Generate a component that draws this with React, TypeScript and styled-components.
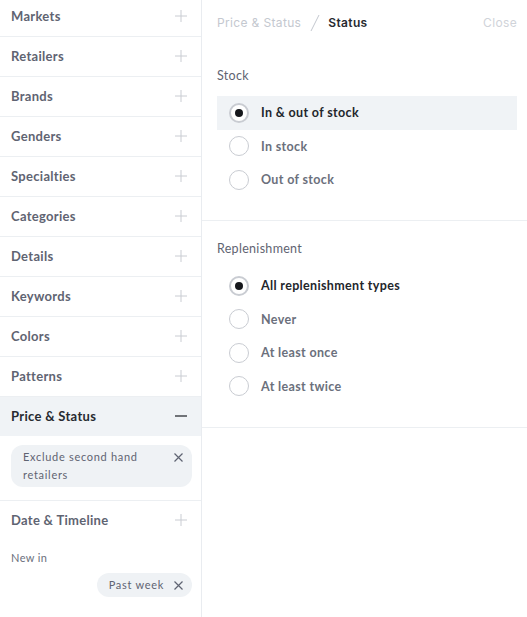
import React, { useState } from "react";
import styled, { createGlobalStyle } from "styled-components";

//--------------Styled Components--------------

const GlobalStyle = createGlobalStyle`
  html, body {
    margin: 0;
    padding: 0;
    background: #ffffff;
    font-family: Lato, "Open Sans", sans-serif;
    -webkit-font-smoothing: antialiased;
  }
`;

const Page = styled.div`
  display: flex;
  width: 527px;
  height: 617px;
  overflow: hidden;
`;

const Sidebar = styled.div`
  width: 201px;
  flex-shrink: 0;
  border-right: 1px solid #e9ecf0;
  display: flex;
  flex-direction: column;
  margin-top: -3px;
`;

const Section = styled.div<{ $last?: boolean }>`
  border-bottom: ${(p) => (p.$last ? "none" : "1px solid #eceff2")};
`;

const SectionHeader = styled.div<{ $open?: boolean }>`
  height: 39px;
  box-sizing: border-box;
  display: flex;
  align-items: center;
  justify-content: space-between;
  padding: 0 14px 2px 11px;
  background: ${(p) => (p.$open ? "#f0f3f6" : "transparent")};
`;

const SectionTitle = styled.span<{ $open?: boolean }>`
  font-size: 13px;
  font-weight: 700;
  letter-spacing: 0.3px;
  color: ${(p) => (p.$open ? "#272a30" : "#5f6472")};
`;

const SectionBody = styled.div`
  padding: 9px 9px 13px 11px;
  display: flex;
  flex-direction: column;
`;

const SubLabel = styled.div`
  font-size: 11px;
  letter-spacing: 0.4px;
  color: #6b707c;
  margin: 2px 0 9px;
`;

const Chip = styled.div<{ $right?: boolean }>`
  display: flex;
  align-items: flex-start;
  gap: 10px;
  background: #eff2f5;
  border-radius: 12px;
  padding: 3px 9px 3px 12px;
  align-self: ${(p) => (p.$right ? "flex-end" : "stretch")};
`;

const ChipText = styled.span`
  flex: 1;
  font-size: 11px;
  line-height: 18px;
  letter-spacing: 0.7px;
  color: #5f6472;
`;

const ChipClose = styled.span`
  display: flex;
  align-items: center;
  height: 14px;
  margin-top: 2px;
`;

const Main = styled.div`
  flex: 1;
  display: flex;
  flex-direction: column;
`;

const TopBar = styled.div`
  height: 44px;
  display: flex;
  align-items: center;
  padding: 1px 10px 0 15px;
  box-sizing: border-box;
  font-family: Inter, "Open Sans", sans-serif;
  font-size: 12px;
  letter-spacing: 0.35px;
`;

const Crumb = styled.span<{ $current?: boolean }>`
  color: ${(p) => (p.$current ? "#272a30" : "#c4c8cf")};
  font-weight: ${(p) => (p.$current ? 600 : 400)};
`;

const Slash = styled.span`
  display: flex;
  margin: 0 8px 0 9px;
`;

const CloseLink = styled.span`
  margin-left: auto;
  color: #d0d3d9;
`;

const Group = styled.div`
  padding: 24px 10px 23.5px 15px;
  border-bottom: 1px solid #eceff2;

  & + & {
    padding-top: 20px;
    padding-bottom: 24px;
  }
`;

const GroupTitle = styled.div`
  font-size: 12.5px;
  letter-spacing: 0.3px;
  color: #5f6472;
  margin-bottom: 12px;
  height: 16px;
  line-height: 16px;
`;

const Option = styled.div<{ $shaded?: boolean }>`
  height: 33.5px;
  display: flex;
  align-items: center;
  gap: 12px;
  padding-left: 12px;
  background: ${(p) => (p.$shaded ? "#f0f3f6" : "transparent")};
`;

const RadioCircle = styled.span<{ $selected?: boolean }>`
  width: 20px;
  height: 20px;
  box-sizing: border-box;
  border-radius: 50%;
  border: ${(p) => (p.$selected ? "2px solid #c9ccd2" : "1px solid #c9ccd2")};
  background: #ffffff;
  display: flex;
  align-items: center;
  justify-content: center;

  &::after {
    content: "";
    display: ${(p) => (p.$selected ? "block" : "none")};
    width: 8px;
    height: 8px;
    border-radius: 50%;
    background: #16181c;
  }
`;

const OptionLabel = styled.span<{ $selected?: boolean }>`
  font-size: 12.5px;
  font-weight: 700;
  letter-spacing: 0.35px;
  color: ${(p) => (p.$selected ? "#23262c" : "#6b707c")};
`;

//============================================

const PlusIcon = () => (
  <svg width="12" height="12" viewBox="0 0 12 12">
    <path d="M6 0v12M0 6h12" stroke="#c9ccd2" strokeWidth="1" />
  </svg>
);

const MinusIcon = () => (
  <svg width="12" height="12" viewBox="0 0 12 12">
    <path d="M0 6h12" stroke="#2b2e34" strokeWidth="1.3" />
  </svg>
);

const XIcon = () => (
  <svg width="9" height="9" viewBox="0 0 9 9">
    <path d="M0.5 0.5l8 8M8.5 0.5l-8 8" stroke="#5f6472" strokeWidth="1.2" />
  </svg>
);

const filters = [
  "Markets",
  "Retailers",
  "Brands",
  "Genders",
  "Specialties",
  "Categories",
  "Details",
  "Keywords",
  "Colors",
  "Patterns",
];

const groups = [
  {
    title: "Stock",
    options: ["In & out of stock", "In stock", "Out of stock"],
    shaded: true,
  },
  {
    title: "Replenishment",
    options: ["All replenishment types", "Never", "At least once", "At least twice"],
    shaded: false,
  },
];

function App() {
  const [selected, setSelected] = useState<Record<string, number>>({
    Stock: 0,
    Replenishment: 0,
  });

  return (
    <Page>
      <GlobalStyle />
      <Sidebar>
        {filters.map((name) => (
          <Section key={name}>
            <SectionHeader>
              <SectionTitle>{name}</SectionTitle>
              <PlusIcon />
            </SectionHeader>
          </Section>
        ))}
        <Section>
          <SectionHeader $open>
            <SectionTitle $open>Price &amp; Status</SectionTitle>
            <MinusIcon />
          </SectionHeader>
          <SectionBody>
            <Chip>
              <ChipText>Exclude second hand retailers</ChipText>
              <ChipClose>
                <XIcon />
              </ChipClose>
            </Chip>
          </SectionBody>
        </Section>
        <Section $last>
          <SectionHeader>
            <SectionTitle>Date &amp; Timeline</SectionTitle>
            <PlusIcon />
          </SectionHeader>
          <SectionBody>
            <SubLabel>New in</SubLabel>
            <Chip $right>
              <ChipText>Past week</ChipText>
              <ChipClose>
                <XIcon />
              </ChipClose>
            </Chip>
          </SectionBody>
        </Section>
      </Sidebar>
      <Main>
        <TopBar>
          <Crumb>Price &amp; Status</Crumb>
          <Slash>
            <svg width="10" height="18" viewBox="0 0 10 18">
              <path d="M9 1L1 17" stroke="#c4c8cf" strokeWidth="1" />
            </svg>
          </Slash>
          <Crumb $current>Status</Crumb>
          <CloseLink>Close</CloseLink>
        </TopBar>
        {groups.map((g) => (
          <Group key={g.title}>
            <GroupTitle>{g.title}</GroupTitle>
            {g.options.map((opt, i) => {
              const isSel = selected[g.title] === i;
              return (
                <Option
                  key={opt}
                  $shaded={g.shaded && isSel}
                  onClick={() => setSelected({ ...selected, [g.title]: i })}
                >
                  <RadioCircle $selected={isSel} />
                  <OptionLabel $selected={isSel}>{opt}</OptionLabel>
                </Option>
              );
            })}
          </Group>
        ))}
      </Main>
    </Page>
  );
}

export default App;
